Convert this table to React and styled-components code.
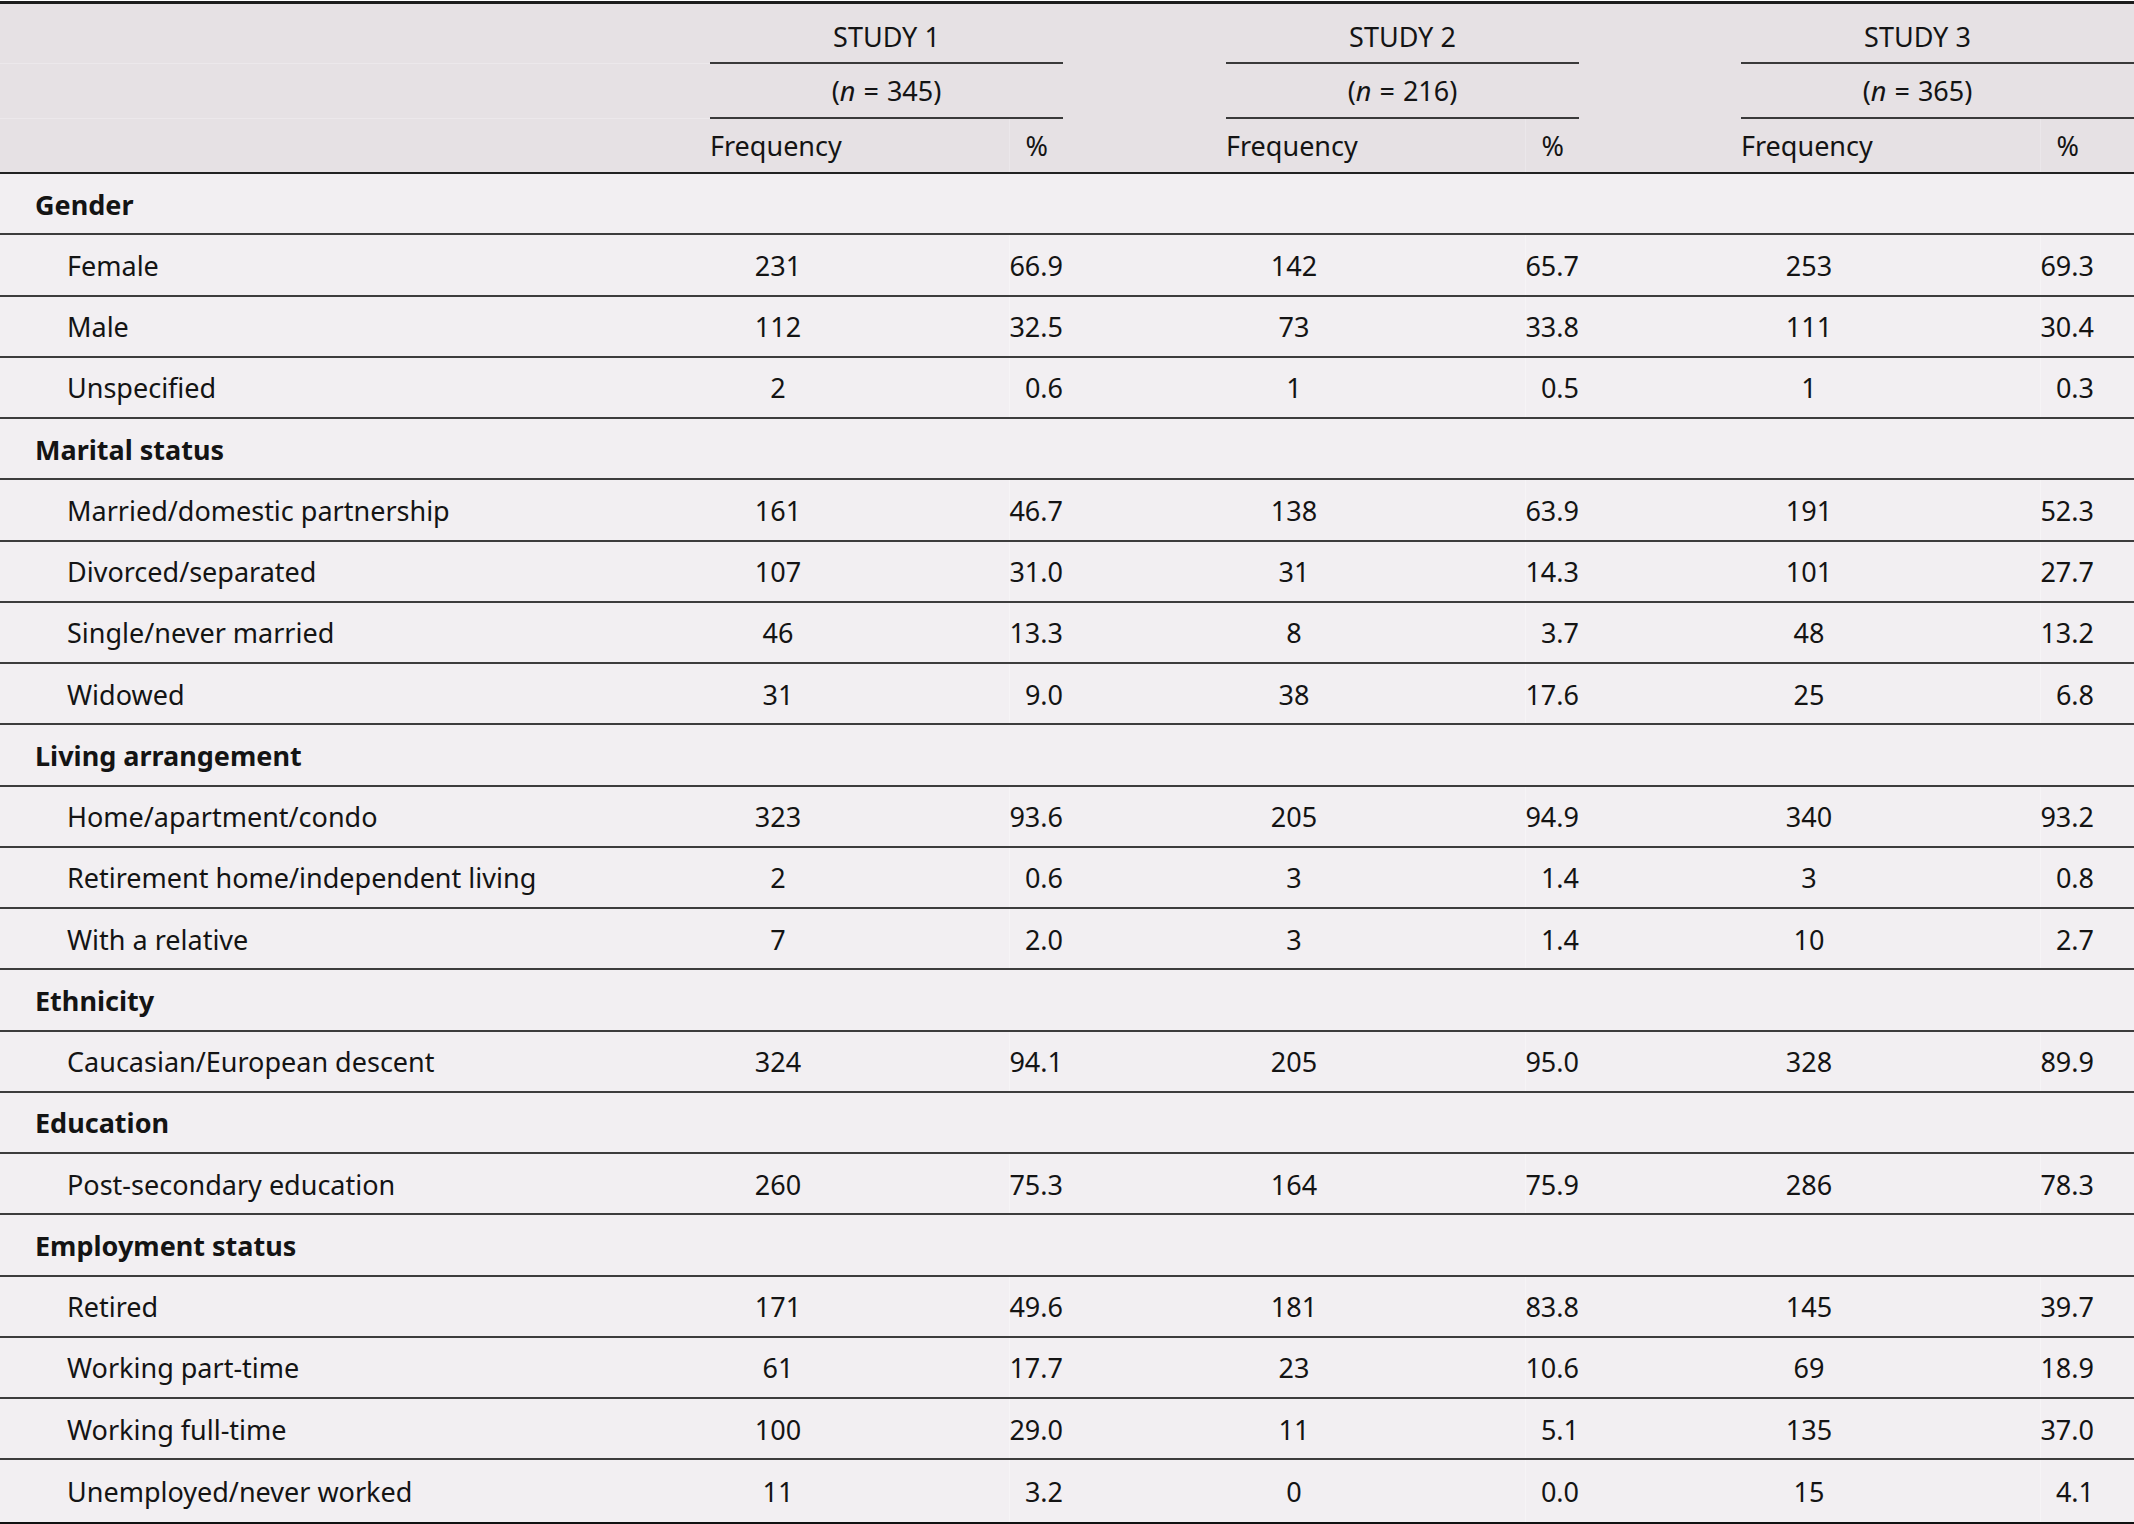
import React from "react";
import styled, { createGlobalStyle } from "styled-components";

const COLS = "710px 299px 54px 163px 299px 54px 162px 299px 94px";

const GlobalStyle = createGlobalStyle`
  html, body {
    margin: 0;
    padding: 0;
    background: #ffffff;
  }
  body {
    font-family: "Noto Sans", "Open Sans", sans-serif;
    color: #141414;
  }
`;

const Wrapper = styled.div`
  width: 2134px;
  padding-top: 1px;
`;

const Table = styled.div`
  border-top: 3px solid #1c1c1c;
  border-bottom: 3px solid #111111;
  font-size: 27px;
  line-height: 1;
`;

const Head = styled.div`
  background: #e6e1e4;
  border-bottom: 2px solid #222222;
`;

const HeadRow = styled.div`
  display: grid;
  grid-template-columns: ${COLS};
  height: ${(p) => p.$h}px;
  align-items: stretch;
`;

const Blank = styled.div`
  grid-column: ${(p) => p.$col};
  border-bottom: ${(p) => (p.$line ? "1px solid #ece8eb" : "none")};
`;

const SpanCell = styled.div`
  grid-column: ${(p) => p.$col} / span 2;
  display: flex;
  align-items: center;
  justify-content: center;
  padding-top: ${(p) => p.$pt || 0}px;
  padding-right: ${(p) => (p.$last ? 40 : 0)}px;
  border-bottom: 2px solid #3a3a3a;
  box-sizing: border-box;
  white-space: nowrap;
`;

const Eq = styled.span`
  margin: 0 8px;
`;

const ColLabel = styled.div`
  display: flex;
  align-items: center;
  justify-content: ${(p) => (p.$pct ? "flex-end" : "flex-start")};
  padding-right: ${(p) => (p.$pct ? (p.$last ? 55 : 15) : 0)}px;
  border-left: ${(p) => (p.$pct ? "1px solid #ebe7ea" : "none")};
`;

const Body = styled.div`
  background: #f2eff2;
`;

const Row = styled.div`
  display: grid;
  grid-template-columns: ${COLS};
  height: 61.25px;
  box-sizing: border-box;
  border-bottom: ${(p) => (p.$end ? "none" : "2px solid #3d3d3d")};
  align-items: center;
`;

const Label = styled.div`
  grid-column: 1;
  padding-left: ${(p) => (p.$sub ? 67 : 35)}px;
  padding-top: 1px;
  font-weight: ${(p) => (p.$sub ? 400 : 700)};
  white-space: nowrap;
`;

const Freq = styled.div`
  grid-column: ${(p) => p.$col};
  width: 136px;
  padding-top: 1px;
  text-align: center;
`;

const Pct = styled.div`
  grid-column: ${(p) => p.$col};
  align-self: stretch;
  display: flex;
  align-items: center;
  justify-content: flex-end;
  padding-top: 1px;
  padding-right: ${(p) => (p.$last ? 40 : 0)}px;
  border-left: 1px solid #f6f4f6;
`;

const studies = [
  { name: "STUDY 1", n: 345, col: 2 },
  { name: "STUDY 2", n: 216, col: 5 },
  { name: "STUDY 3", n: 365, col: 8 },
];

const sections = [
  {
    title: "Gender",
    rows: [
      ["Female", 231, "66.9", 142, "65.7", 253, "69.3"],
      ["Male", 112, "32.5", 73, "33.8", 111, "30.4"],
      ["Unspecified", 2, "0.6", 1, "0.5", 1, "0.3"],
    ],
  },
  {
    title: "Marital status",
    rows: [
      ["Married/domestic partnership", 161, "46.7", 138, "63.9", 191, "52.3"],
      ["Divorced/separated", 107, "31.0", 31, "14.3", 101, "27.7"],
      ["Single/never married", 46, "13.3", 8, "3.7", 48, "13.2"],
      ["Widowed", 31, "9.0", 38, "17.6", 25, "6.8"],
    ],
  },
  {
    title: "Living arrangement",
    rows: [
      ["Home/apartment/condo", 323, "93.6", 205, "94.9", 340, "93.2"],
      ["Retirement home/independent living", 2, "0.6", 3, "1.4", 3, "0.8"],
      ["With a relative", 7, "2.0", 3, "1.4", 10, "2.7"],
    ],
  },
  {
    title: "Ethnicity",
    rows: [["Caucasian/European descent", 324, "94.1", 205, "95.0", 328, "89.9"]],
  },
  {
    title: "Education",
    rows: [["Post-secondary education", 260, "75.3", 164, "75.9", 286, "78.3"]],
  },
  {
    title: "Employment status",
    rows: [
      ["Retired", 171, "49.6", 181, "83.8", 145, "39.7"],
      ["Working part-time", 61, "17.7", 23, "10.6", 69, "18.9"],
      ["Working full-time", 100, "29.0", 11, "5.1", 135, "37.0"],
      ["Unemployed/never worked", 11, "3.2", 0, "0.0", 15, "4.1"],
    ],
  },
];

function Header() {
  return (
    <Head>
      <HeadRow $h={60}>
        <Blank $col={1} $line />
        {studies.map((s, i) => (
          <SpanCell key={s.name} $col={s.col} $pt={6} $last={i === 2}>
            {s.name}
          </SpanCell>
        ))}
      </HeadRow>
      <HeadRow $h={55}>
        <Blank $col={1} $line />
        {studies.map((s, i) => (
          <SpanCell key={s.name} $col={s.col} $last={i === 2}>
            (<i>n</i>
            <Eq>=</Eq>
            {s.n})
          </SpanCell>
        ))}
      </HeadRow>
      <HeadRow $h={53}>
        <Blank $col={1} />
        {studies.map((s, i) => (
          <React.Fragment key={s.name}>
            <ColLabel style={{ gridColumn: s.col }}>Frequency</ColLabel>
            <ColLabel $pct $last={i === 2} style={{ gridColumn: s.col + 1 }}>
              %
            </ColLabel>
          </React.Fragment>
        ))}
      </HeadRow>
    </Head>
  );
}

function App() {
  const total = sections.reduce((a, s) => a + s.rows.length + 1, 0);
  let count = 0;
  return (
    <Wrapper>
      <GlobalStyle />
      <Table>
        <Header />
        <Body>
          {sections.map((sec) => {
            count += 1;
            const items = [
              <Row key={sec.title} $end={count === total}>
                <Label>{sec.title}</Label>
              </Row>,
            ];
            sec.rows.forEach((r) => {
              count += 1;
              items.push(
                <Row key={sec.title + r[0]} $end={count === total}>
                  <Label $sub>{r[0]}</Label>
                  {studies.map((s, i) => (
                    <React.Fragment key={s.name}>
                      <Freq $col={s.col}>{r[1 + i * 2]}</Freq>
                      <Pct $col={s.col + 1} $last={i === 2}>
                        {r[2 + i * 2]}
                      </Pct>
                    </React.Fragment>
                  ))}
                </Row>
              );
            });
            return items;
          })}
        </Body>
      </Table>
    </Wrapper>
  );
}

export default App;
